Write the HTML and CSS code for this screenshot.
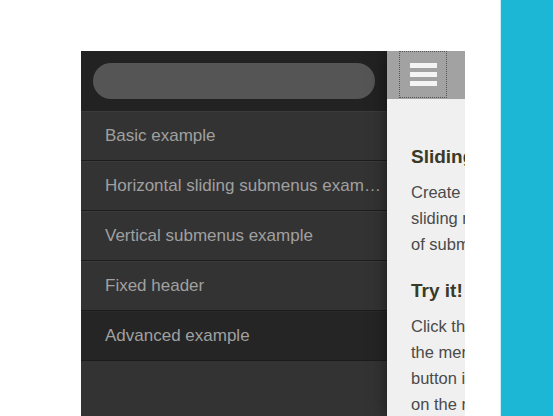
FILE: index.html
```html
<!DOCTYPE html>
<html lang="en">
<head>
<meta charset="utf-8">
<title>mmenu demo</title>
<link rel="stylesheet" href="styles.css">
</head>
<body>
<div class="stage">
  <div class="gutter"></div>
  <div class="device">
    <div class="phone">
      <nav class="menu">
        <div class="menu-head">
          <div class="search"></div>
        </div>
        <ul class="menu-list">
          <li class="item">Basic example</li>
          <li class="item">Horizontal sliding submenus example</li>
          <li class="item">Vertical submenus example</li>
          <li class="item">Fixed header</li>
          <li class="item selected">Advanced example</li>
        </ul>
      </nav>
      <main class="page">
        <header class="page-head">
          <div class="burger"><span class="bar"></span><span class="bar"></span><span class="bar"></span></div>
        </header>
        <section class="content">
          <h2 class="title">Sliding submenus</h2>
          <p class="text"><span class="line">Create a mobile menu with</span><span class="line">sliding menus and an unlimited</span><span class="line">of submenus.</span></p>
          <h2 class="title">Try it!</h2>
          <p class="text"><span class="line">Click the menu icon to open</span><span class="line">the menu, or use the menu</span><span class="line">button in the header</span><span class="line">on the right.</span></p>
        </section>
      </main>
    </div>
  </div>
  <div class="spacer"></div>
  <div class="band"></div>
</div>
</body>
</html>
```
FILE: styles.css
```css
* { box-sizing: border-box; }
html, body { margin: 0; padding: 0; background: #fff; }
body { font-family: "Liberation Sans", Arial, sans-serif; overflow: hidden; }

.stage {
  display: grid;
  grid-template-columns: 81px 384px 35px 53px;
  height: 416px;
}

.device { padding-top: 51px; height: 416px; }

.phone {
  display: flex;
  height: 365px;
  overflow: hidden;
  background: #333;
}

.menu {
  flex: 0 0 306px;
  min-width: 0;
  background: #333;
  display: flex;
  flex-direction: column;
}

.menu-head {
  height: 60px;
  background: #222;
  padding: 12px;
}
.search {
  height: 36px;
  border-radius: 18px;
  background: #555;
}

.menu-list { list-style: none; margin: 0; padding: 0; }
.item {
  height: 50px;
  line-height: 48px;
  border-top: 1px solid #3b3b3b;
  border-bottom: 1px solid #1c1c1c;
  padding: 0 4px 0 24px;
  color: #a0a0a0;
  font-size: 17px;
  white-space: nowrap;
  overflow: hidden;
  text-overflow: ellipsis;
}
.item.selected { background: #252525; border-top-color: #2a2a2a; }

.page {
  flex: 0 0 320px;
  background: #f0f0f0;
  box-shadow: 0 0 16px rgba(0, 0, 0, 0.5);
  position: relative;
}

.page-head {
  height: 48px;
  background: #a2a2a2;
  padding-left: 12px;
}
.burger {
  width: 48px;
  height: 47px;
  border: 1px dotted #555;
  display: flex;
  flex-direction: column;
  align-items: center;
  justify-content: center;
  gap: 4px;
}
.bar { display: block; width: 27px; height: 5px; background: #f4f4f4; }

.content { padding: 46px 0 0 24px; white-space: nowrap; }
.title {
  margin: 0 0 10px;
  font-size: 19px;
  line-height: 24px;
  font-weight: bold;
  color: #3a3a26;
}
.text {
  margin: 0 0 22px;
  font-size: 16.5px;
  line-height: 26px;
  color: #4a4a4a;
}
.line { display: block; }

.band {
  background: #1bb7d4;
  border-left: 1px solid #c9eef5;
}
```
